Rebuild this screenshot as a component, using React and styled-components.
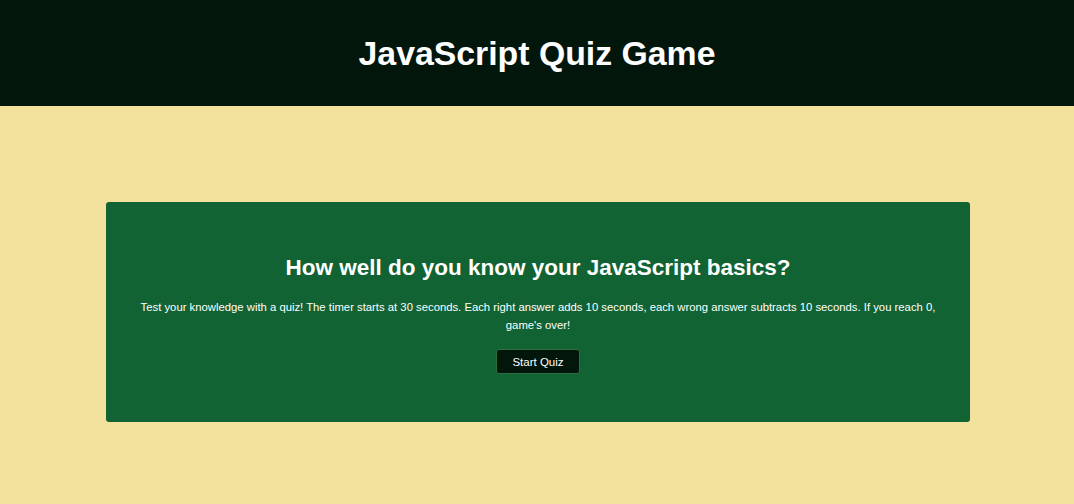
import React from "react";
import styled, { createGlobalStyle } from "styled-components";

const Global = createGlobalStyle`
  html, body { margin: 0; padding: 0; }
  body {
    background: #f3e29e;
    font-family: "Liberation Sans", Arial, sans-serif;
    min-height: 504px;
  }
`;

const Header = styled.header`
  background: #02160c;
  height: 106px;
  display: flex;
  align-items: center;
  justify-content: center;
`;

const Title = styled.h1`
  margin: 0;
  color: #ffffff;
  font-size: 33.8px;
  font-weight: 700;
`;

const Main = styled.main`
  padding: 96px 104px 0 106px;
  display: flex;
  justify-content: center;
`;

const Card = styled.section`
  width: 864px;
  height: 220px;
  box-sizing: border-box;
  background: #116334;
  border-radius: 3px;
  display: flex;
  flex-direction: column;
  align-items: center;
  padding: 53px 30px 0;
  color: #ffffff;
  text-align: center;
`;

const Heading = styled.h2`
  margin: 0 0 17px;
  font-size: 22.5px;
  font-weight: 700;
`;

const Text = styled.p`
  margin: 0 0 15px;
  font-size: 11.3px;
  line-height: 18px;
`;

const Button = styled.button`
  background: #02160c;
  color: #ffffff;
  border: 1px solid #2f6e3f;
  border-radius: 3px;
  width: 84px;
  height: 25px;
  padding: 0;
  font-family: "Liberation Sans", Arial, sans-serif;
  font-size: 11.5px;
  cursor: pointer;
`;

export default function App() {
  return (
    <>
      <Global />
      <Header>
        <Title>JavaScript Quiz Game</Title>
      </Header>
      <Main>
        <Card>
          <Heading>How well do you know your JavaScript basics?</Heading>
          <Text>
            Test your knowledge with a quiz! The timer starts at 30 seconds. Each right answer adds 10 seconds, each wrong answer subtracts 10 seconds. If you reach 0, game's over!
          </Text>
          <Button>Start Quiz</Button>
        </Card>
      </Main>
    </>
  );
}
